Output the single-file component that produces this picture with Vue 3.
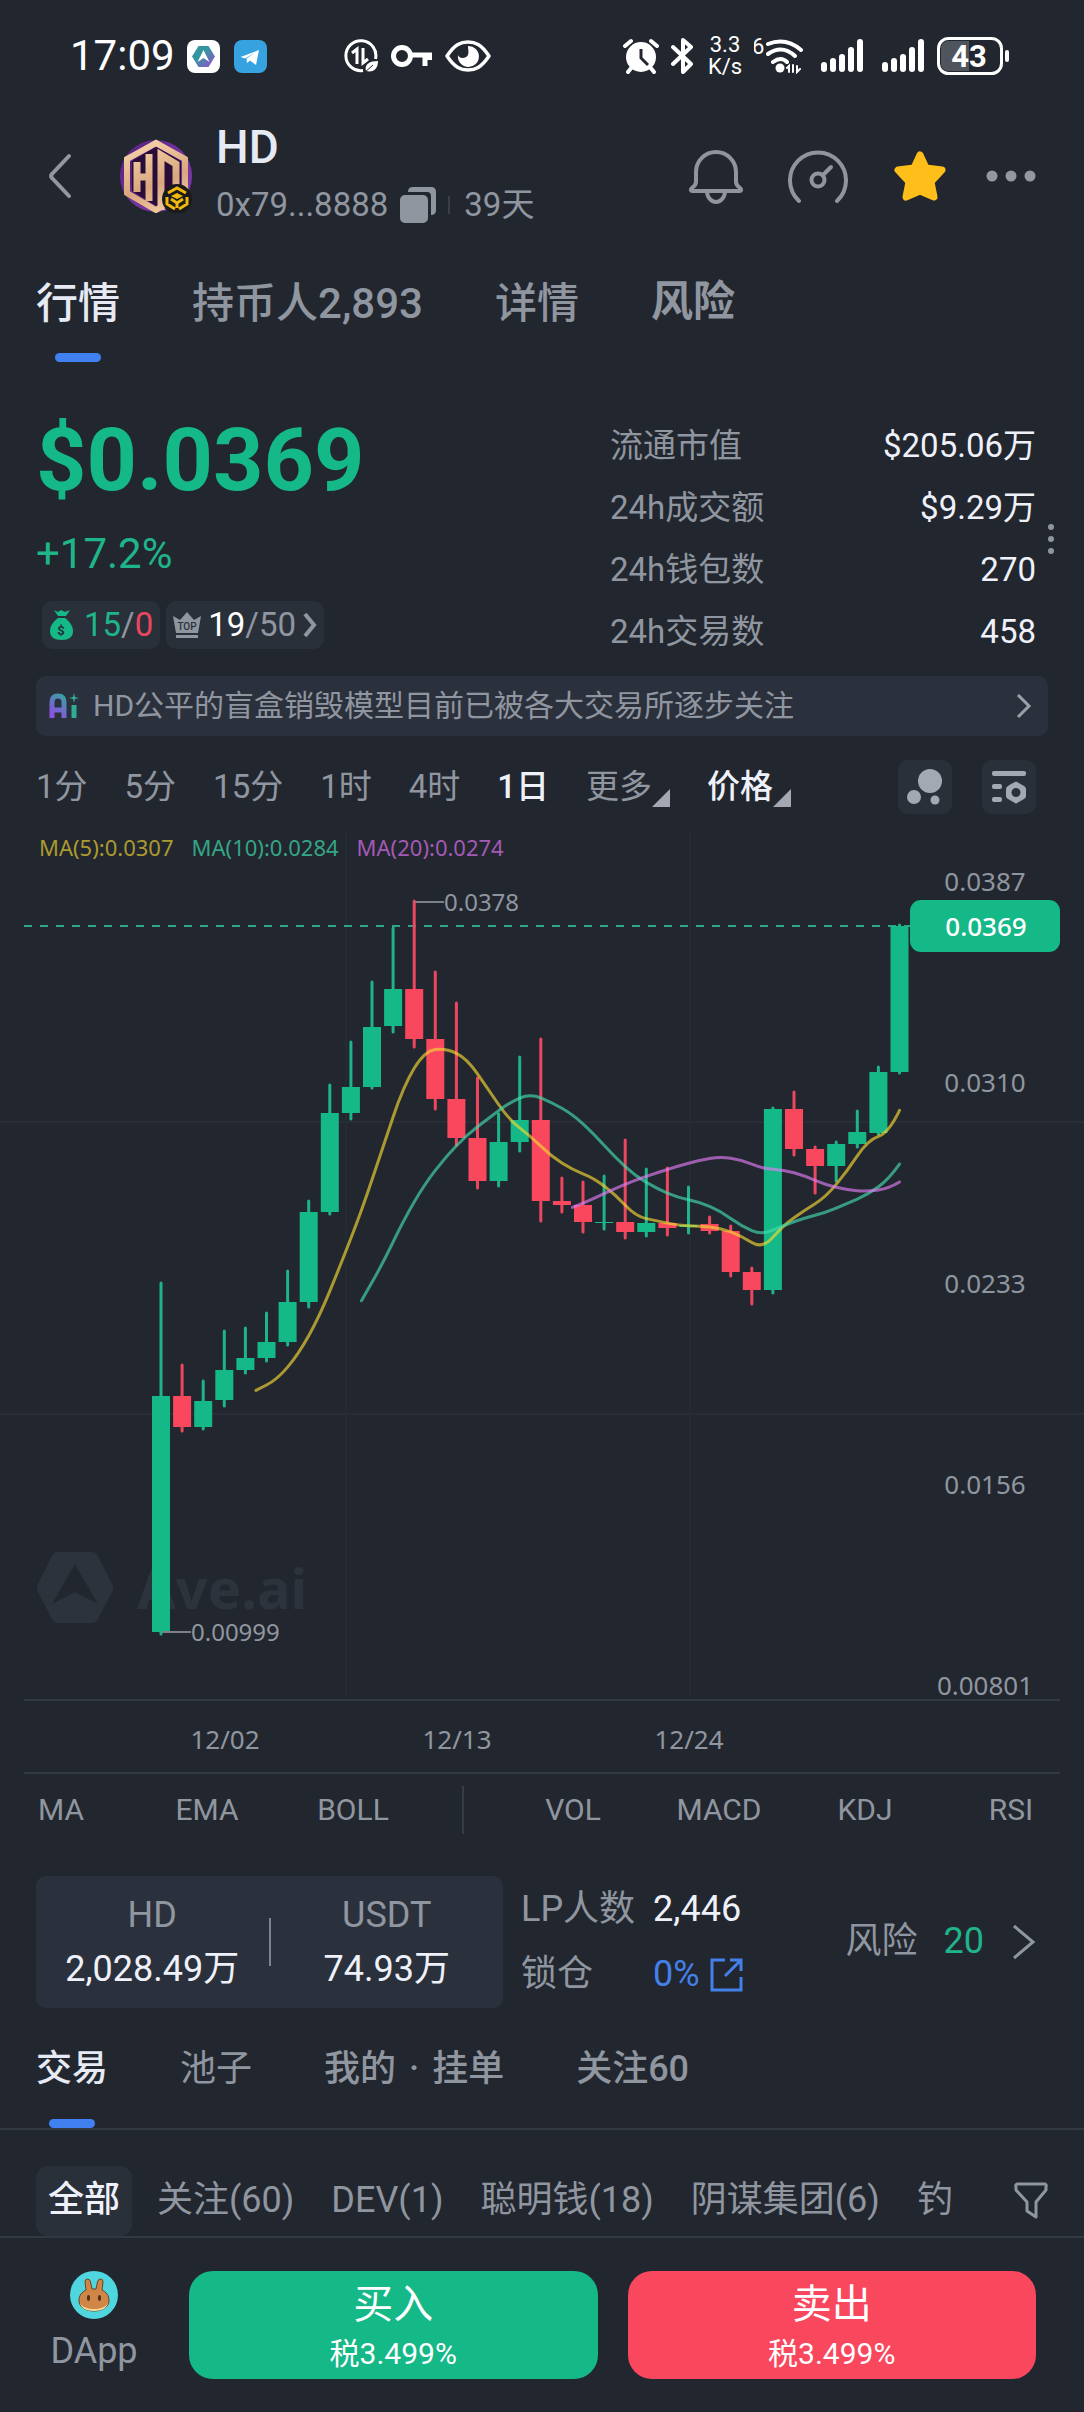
<!-- App.vue : 代币行情页 -->
<script setup>
import { ref } from "vue";

const tabs = [
  { name: "行情" },
  { name: "持币人2,893" },
  { name: "详情" },
  { name: "风险", bold: true },
];
const activeTab = ref("行情");

const stats = [
  { label: "流通市值", value: "$205.06万" },
  { label: "24h成交额", value: "$9.29万" },
  { label: "24h钱包数", value: "270" },
  { label: "24h交易数", value: "458" },
];

const periods = ["1分", "5分", "15分", "1时", "4时", "1日"];
const activePeriod = ref("1日");

const mainIndicators = ["MA", "EMA", "BOLL"];
const subIndicators = ["VOL", "MACD", "KDJ", "RSI"];

const tradeTabs = [["交易"], ["池子"], ["我的", "挂单"], ["关注60"]];
const activeTradeTab = ref("交易");

const filters = ["全部", "关注(60)", "DEV(1)", "聪明钱(18)", "阴谋集团(6)", "钓"];
const activeFilter = ref("全部");

const signalBars = [10, 14, 18, 25, 33];

// ===== K线 =====
// [涨=1/跌=0, 最高, 实体上沿, 实体下沿, 最低]
const rawCandles = [
  [1, 453, 566, 802, 804],
  [0, 535, 566, 597, 601],
  [1, 551, 571, 597, 599],
  [1, 501, 540, 570, 576],
  [1, 498, 528, 540, 543],
  [1, 483, 512, 528, 531],
  [1, 441, 472, 512, 515],
  [1, 371, 382, 472, 477],
  [1, 255, 283, 382, 384],
  [1, 212, 257, 283, 289],
  [1, 152, 197, 257, 258],
  [1, 98, 159, 196, 202],
  [0, 71, 159, 209, 217],
  [0, 142, 209, 269, 279],
  [0, 173, 269, 308, 315],
  [0, 248, 308, 351, 358],
  [1, 284, 312, 351, 356],
  [1, 227, 290, 312, 321],
  [0, 209, 290, 371, 391],
  [0, 348, 371, 375, 382],
  [0, 352, 375, 392, 402],
  [1, 346, 392, 393, 399],
  [0, 310, 392, 402, 408],
  [1, 339, 393, 402, 406],
  [0, 338, 393, 398, 405],
  [1, 357, 395, 397, 403],
  [0, 387, 394, 401, 403],
  [0, 396, 401, 442, 446],
  [0, 438, 442, 460, 474],
  [1, 278, 279, 460, 463],
  [0, 262, 279, 319, 325],
  [0, 317, 319, 336, 363],
  [1, 312, 314, 336, 351],
  [1, 281, 302, 314, 317],
  [1, 237, 242, 303, 304],
  [1, 95, 96, 242, 243],
];
const STEP = 21.1;
const FIRST_X = 161;

const candles = rawCandles.map(([up, high, top, bottom, low], i) => ({
  x: FIRST_X + i * STEP,
  up: up === 1,
  high,
  top,
  bottom,
  low,
  close: up ? top : bottom,
}));

// 均线：用中点做二次贝塞尔平滑
function maPath(n) {
  const pts = [];
  for (let i = n - 1; i < candles.length; i++) {
    const sum = candles.slice(i - n + 1, i + 1).reduce((s, c) => s + c.close, 0);
    pts.push([candles[i].x + STEP / 2, sum / n]);
  }
  let d = `M${pts[0][0]} ${pts[0][1]}`;
  for (let i = 0; i < pts.length - 1; i++) {
    const mx = (pts[i][0] + pts[i + 1][0]) / 2;
    const my = (pts[i][1] + pts[i + 1][1]) / 2;
    d += ` Q${pts[i][0]} ${pts[i][1]} ${mx} ${my}`;
  }
  return d;
}

const maLines = [
  { cls: "ma5", d: maPath(5) },
  { cls: "ma10", d: maPath(10) },
  { cls: "ma20", d: maPath(20) },
];

const priceAxis = [
  { y: 51, text: "0.0387" },
  { y: 252, text: "0.0310" },
  { y: 453, text: "0.0233" },
  { y: 654, text: "0.0156" },
  { y: 855, text: "0.00801" },
];
const dateAxis = [
  { x: 225, text: "12/02" },
  { x: 457, text: "12/13" },
  { x: 689, text: "12/24" },
];
</script>

<template>
  <div class="page">
    <!-- 系统状态栏 -->
    <div class="status-bar">
      <span class="clock">17:09</span>
      <div class="status-apps">
        <svg width="33" height="33" viewBox="0 0 33 33">
          <defs>
            <linearGradient id="aveGrad" x1="0" y1="0" x2="1" y2="1">
              <stop offset="0.4" stop-color="#3596a0" />
              <stop offset="0.8" stop-color="#7a63c4" />
            </linearGradient>
          </defs>
          <rect width="33" height="33" rx="8" fill="#fff" />
          <path d="M11.500 6h10l6.500 10.500-6.500 10.500h-10L5 16.500z" fill="url(#aveGrad)" />
          <path d="M16.500 10l6 12-6-4-6 4z" fill="#fff" />
        </svg>
        <svg width="33" height="33" viewBox="0 0 33 33">
          <rect width="33" height="33" rx="8" fill="#36a3e0" />
          <path d="M6.500 17L25 10l-3 15-6-4.500-3 2.500-.5-4.500L21 12.500l-10 6z" fill="#fff" />
        </svg>
      </div>
      <div class="status-mid">
        <svg width="35" height="34" viewBox="0 0 35 34" fill="none" stroke="#fff">
          <path d="M31.500 20A15 15 0 1 0 19 31.500" stroke-width="3" />
          <path d="M8 14l5-4V25M19 9v15l5-4" stroke-width="3" />
          <path d="M22 32c-2-7 4-10 12-10 0 7-4 12-12 10z" fill="#fff" stroke="none" />
          <path d="M20 34l9-8" stroke="#22272f" stroke-width="1" />
        </svg>
        <svg width="42" height="24" viewBox="0 0 42 24" fill="none" stroke="#fff">
          <circle cx="11" cy="12" r="8.500" stroke-width="5" />
          <path d="M20 11h21M34 12v10M38.500 12v4" stroke-width="5" />
        </svg>
        <svg width="46" height="32" viewBox="0 0 46 32" fill="none" stroke="#fff">
          <path d="M2 16C10 4 16 2 23 2s13 2 21 14C36 28 30 30 23 30S10 28 2 16z" stroke-width="3.500" stroke-linejoin="round" />
          <path d="M23 6a10.500 10.500 0 1 1-10 9c1 4 8 4 10 0 1-3 0-6 0-9z" fill="#fff" stroke="none" />
        </svg>
      </div>
      <div class="status-right">
        <svg class="alarm" width="36" height="36" viewBox="0 0 36 36" fill="none" stroke="#fff">
          <circle cx="18" cy="19" r="15" fill="#fff" stroke="none" />
          <path d="M2 8l6-5M28 3l6 5M9 29l-4 5M27 29l4 5" stroke-width="4" stroke-linecap="round" />
          <path d="M18 11v9l7 7" stroke="#22272f" stroke-width="3" />
        </svg>
        <svg class="bluetooth" width="22" height="36" viewBox="0 0 22 36" fill="none" stroke="#fff" stroke-width="4" stroke-linejoin="round" stroke-linecap="round">
          <path d="M2 9l18 17-8 8V2l8 7L2 26" />
        </svg>
        <div class="net-speed"><span>3.3</span><span>K/s</span></div>
        <svg class="wifi" width="49" height="36" viewBox="0 0 49 36" fill="none" stroke="#fff" stroke-width="4" stroke-linecap="round">
          <text x="-2" y="16" class="wifi-gen">6</text>
          <path d="M14 6q18-7 33 6M14 16q14-10 27 2M19 24q8-6 14 0" />
          <circle cx="26" cy="30" r="4.500" fill="#fff" stroke="none" />
          <path d="M35 34v-6l-2 2M39 27v7M43 28v6l3-3" stroke-width="2" />
        </svg>
        <svg v-for="n in 2" :key="n" class="signal" width="43" height="36" viewBox="0 0 43 36">
          <rect v-for="(h, i) in signalBars" :key="h" :x="i * 9" :y="34 - h" width="6" :height="h" rx="3" fill="#fff" />
        </svg>
        <svg width="73" height="38" viewBox="0 0 73 38">
          <rect x="1.500" y="1.500" width="63" height="35" rx="10" fill="none" stroke="#fff" stroke-width="3" />
          <path d="M11 4h21v30H11a7 7 0 0 1-7-7V11a7 7 0 0 1 7-7z" fill="#50545c" />
          <rect x="68" y="13" width="4" height="12" rx="2" fill="#fff" />
          <text x="32" y="30" class="battery-text" text-anchor="middle">43</text>
        </svg>
      </div>
    </div>

    <!-- 代币头部 -->
    <header class="token-header">
      <button class="icon-btn back" aria-label="返回">
        <svg width="24" height="48" viewBox="0 0 24 48" fill="none" stroke="#9297a0" stroke-width="4" stroke-linecap="round" stroke-linejoin="round">
          <path d="M21 4L4 22q-2 2 0 4l17 18" />
        </svg>
      </button>
      <svg class="avatar" width="72" height="74" viewBox="0 0 72 74">
        <defs>
          <radialGradient id="avatarBg" cx="0.4" cy="0.4" r="0.6">
            <stop offset="0" stop-color="#351052" />
            <stop offset="0.7" stop-color="#6a2a94" />
            <stop offset="1" stop-color="#7c38a6" />
          </radialGradient>
          <linearGradient id="gold" gradientUnits="userSpaceOnUse" x1="20" y1="0" x2="50" y2="74">
            <stop offset="0" stop-color="#f7d5ad" />
            <stop offset="0.6" stop-color="#d9a77d" />
            <stop offset="1" stop-color="#f2cfa4" />
          </linearGradient>
        </defs>
        <circle cx="36" cy="37" r="36" fill="url(#avatarBg)" />
        <path d="M36 4L65 20v34L36 71 7 54V20z" fill="none" stroke="url(#gold)" stroke-width="6" />
        <path d="M36 8L61 22v29L36 67 12 52V22z" fill="#2a0c38" />
        <path d="M17 23v30M29 15v47M17 38h12" stroke="url(#gold)" stroke-width="7" fill="none" />
        <path d="M41 71V16l15 9v29" stroke="url(#gold)" stroke-width="7" fill="none" />
        <circle cx="57" cy="60" r="15" fill="#1c1a1c" />
        <g fill="none" stroke="#f0b90b" stroke-width="3">
          <path d="M48 54l9-5 9 5" />
          <path d="M51 57l6-3 6 3-6 3z" fill="#f0b90b" stroke="none" />
          <path d="M47 58v7l8 5M67 58v7l-8 5M51 60l6 4 6-4M57 63v6" />
        </g>
      </svg>
      <div class="token-id">
        <h1>HD</h1>
        <div class="token-meta">
          <span>0x79...8888</span>
          <button class="icon-btn copy" aria-label="复制合约地址">
            <svg width="36" height="36" viewBox="0 0 36 36" fill="#9096a0">
              <rect x="0" y="8" width="28" height="28" rx="5" />
              <path d="M8 5q0-5 5-5h18q5 0 5 5v18q0 5-5 5V9q0-4-4-4z" />
            </svg>
          </button>
          <i class="meta-divider"></i>
          <span>39天</span>
        </div>
      </div>
      <div class="header-actions">
        <button class="icon-btn" aria-label="提醒">
          <svg width="54" height="56" viewBox="0 0 54 56" fill="none" stroke="#8f949e" stroke-width="4" stroke-linejoin="round">
            <path d="M7 24a20 20 0 0 1 40 0v10q0 3 4 6c2 2 1 3-1 3H4c-2 0-3-1-1-3q4-3 4-6z" />
            <path d="M18 43a9 11 0 0 0 18 0" />
          </svg>
        </button>
        <button class="icon-btn" aria-label="检测">
          <svg width="60" height="56" viewBox="0 0 60 56" fill="none" stroke="#8f949e" stroke-width="4" stroke-linecap="round">
            <path d="M11 53A28 28 0 1 1 49 53" />
            <circle cx="30" cy="32" r="6.500" />
            <path d="M35 27l8-8" />
          </svg>
        </button>
        <button class="icon-btn" aria-label="收藏">
          <svg width="54" height="54" viewBox="0 0 54 54">
            <path d="M27 6l6 13 16 2-11 12 3 15-14-6-14 6 3-15L5 21l16-2z" fill="#ffbe1a" stroke="#ffbe1a" stroke-width="7" stroke-linejoin="round" />
          </svg>
        </button>
        <button class="icon-btn more" aria-label="更多操作">
          <svg width="50" height="12" viewBox="0 0 50 12" fill="#9297a0">
            <circle cx="6" cy="6" r="5.500" />
            <circle cx="25" cy="6" r="5.500" />
            <circle cx="44" cy="6" r="5.500" />
          </svg>
        </button>
      </div>
    </header>

    <nav class="tabs">
      <button
        v-for="tab in tabs"
        :key="tab.name"
        class="tab"
        :class="{ active: activeTab === tab.name, bold: tab.bold }"
        @click="activeTab = tab.name"
      >
        {{ tab.name }}
      </button>
    </nav>

    <!-- 价格与统计 -->
    <section class="overview">
      <div class="price-block">
        <div class="price">$0.0369</div>
        <div class="change">+17.2%</div>
        <div class="chips">
          <button class="chip">
            <svg width="25" height="32" viewBox="0 0 25 32">
              <path d="M5 1l4 2 3-2 4 2 5-2-4 6H9z" fill="#15b887" />
              <path d="M9 9h7c5 4 8 8 8 13 0 6-4 9-11.500 9S1 28 1 22C1 17 4 13 9 9z" fill="#15b887" />
              <text x="12" y="26" class="bag-text" text-anchor="middle">$</text>
            </svg>
            <span><b class="up">15</b>/<b class="down">0</b></span>
          </button>
          <button class="chip top-chip">
            <svg width="28" height="28" viewBox="0 0 28 28">
              <path d="M0 5l7 4 7-8 7 8 7-4-3 17H3z" fill="#9096a0" />
              <rect x="3" y="24" width="22" height="3" fill="#9096a0" />
              <text x="14" y="19" class="crown-text" text-anchor="middle">TOP</text>
            </svg>
            <span><b class="white">19</b>/50</span>
            <svg width="14" height="26" viewBox="0 0 14 26" fill="none" stroke="#9096a0" stroke-width="4">
              <path d="M2 2l9 11-9 11" />
            </svg>
          </button>
        </div>
      </div>
      <dl class="stats">
        <div v-for="item in stats" :key="item.label" class="stat-row">
          <dt>{{ item.label }}</dt>
          <dd>{{ item.value }}</dd>
        </div>
      </dl>
      <button class="icon-btn stats-more" aria-label="展开统计">
        <svg width="6" height="30" viewBox="0 0 6 30" fill="#9096a0">
          <circle cx="3" cy="3" r="3" />
          <circle cx="3" cy="15" r="3" />
          <circle cx="3" cy="27" r="3" />
        </svg>
      </button>
    </section>

    <a href="#" class="ai-bar">
      <svg width="30" height="26" viewBox="0 0 30 26" fill="none">
        <defs>
          <linearGradient id="aiGrad" gradientUnits="userSpaceOnUse" x1="0" y1="25" x2="16" y2="2">
            <stop offset="0.2" stop-color="#8a52e0" />
            <stop offset="1" stop-color="#35a3a0" />
          </linearGradient>
        </defs>
        <path d="M3 25V9q0-6 6-6t6 6v16M3 17h12" stroke="url(#aiGrad)" stroke-width="5" />
        <path d="M25 12v13" stroke="#2fae95" stroke-width="5" />
        <path d="M25 0l1 4 4 1-4 1-1 4-1-4-4-1 4-1z" fill="#2fae95" />
      </svg>
      <span>HD公平的盲盒销毁模型目前已被各大交易所逐步关注</span>
      <svg class="ai-arrow" width="16" height="24" viewBox="0 0 16 24" fill="none" stroke="#9aa0aa" stroke-width="3">
        <path d="M2 1l11 11L2 23" />
      </svg>
    </a>

    <!-- 周期 -->
    <div class="periods">
      <button
        v-for="p in periods"
        :key="p"
        class="period"
        :class="{ active: activePeriod === p }"
        @click="activePeriod = p"
      >
        {{ p }}
      </button>
      <button class="period dropdown">更多</button>
      <button class="period dropdown active">价格</button>
      <div class="chart-tools">
        <button class="tool" aria-label="气泡图">
          <svg width="36" height="38" viewBox="0 0 36 38" fill="#a3a8b2">
            <circle cx="23" cy="13" r="12" />
            <circle cx="7" cy="29" r="7" />
            <circle cx="28" cy="32" r="4.500" />
          </svg>
        </button>
        <button class="tool" aria-label="图表设置">
          <svg width="36" height="34" viewBox="0 0 36 34" fill="#a3a8b2">
            <rect x="1" y="1" width="34" height="5" rx="2" />
            <rect x="1" y="14" width="10" height="5" rx="2" />
            <rect x="1" y="27" width="10" height="5" rx="2" />
            <path d="M20 14l4-2q1-1 2 0l7 4q2 1 2 3v7q0 2-2 3l-7 4q-1 1-2 0l-7-4q-2-1-2-3v-7q0-2 2-3zM25 18a4.500 4.500 0 1 0 0 9 4.500 4.500 0 1 0 0-9z" fill-rule="evenodd" />
          </svg>
        </button>
      </div>
    </div>

    <!-- K线图 -->
    <svg class="chart" viewBox="0 0 1084 944" role="img" aria-label="HD 日K线">
      <path class="grid-x" d="M0 292H1084M0 584H1084" />
      <path class="grid-y" d="M346 0V866M690 0V866" />
      <path class="axis-line" d="M24 870H1060M24 943H1060" />

      <!-- 水印 -->
      <g class="watermark">
        <path d="M58 722h34q4 0 6 4l14 28q2 4 0 8l-14 27q-2 4-6 4H58q-4 0-6-4L38 762q-2-4 0-8l14-28q2-4 6-4zM75 734L52 774l23-12 23 12z" fill-rule="evenodd" />
        <text x="137" y="779">Ave.ai</text>
      </g>

      <text class="legend" x="39" y="26"><tspan class="t-ma5">MA(5):0.0307</tspan><tspan class="t-ma10" dx="18">MA(10):0.0284</tspan><tspan class="t-ma20" dx="18">MA(20):0.0274</tspan></text>

      <path class="last-line" d="M24 96H910" />

      <g v-for="c in candles" :key="c.x" :class="c.up ? 'candle-up' : 'candle-down'">
        <line :x1="c.x" :x2="c.x" :y1="c.high" :y2="c.low" />
        <rect :x="c.x - 9" :y="c.top" width="18" :height="c.bottom - c.top" />
      </g>

      <path v-for="l in maLines" :key="l.cls" class="ma-line" :class="l.cls" :d="l.d" />

      <path class="marker" d="M415 72H444M162 802H191" />
      <text class="marker-text" x="444" y="81">0.0378</text>
      <text class="marker-text" x="191" y="811">0.00999</text>

      <text v-for="a in priceAxis" :key="a.text" class="axis-text" x="985" :y="a.y + 10" text-anchor="middle">{{ a.text }}</text>
      <rect class="last-tag" x="910" y="70" width="150" height="52" rx="11" />
      <text class="axis-text last-text" x="986" y="106" text-anchor="middle">0.0369</text>

      <text v-for="a in dateAxis" :key="a.text" class="axis-text" :x="a.x" y="919" text-anchor="middle">{{ a.text }}</text>
    </svg>

    <div class="indicators">
      <button v-for="n in mainIndicators" :key="n">{{ n }}</button>
      <i></i>
      <button v-for="n in subIndicators" :key="n">{{ n }}</button>
    </div>

    <!-- 池子信息 -->
    <section class="pool">
      <div class="pool-box">
        <div class="pool-side"><span>HD</span><strong>2,028.49万</strong></div>
        <i></i>
        <div class="pool-side"><span>USDT</span><strong>74.93万</strong></div>
      </div>
      <div class="lp">
        <span>LP人数</span>
        <strong>2,446</strong>
        <span>锁仓</span>
        <a href="#">
          0%
          <svg width="33" height="34" viewBox="0 0 33 34" fill="none" stroke="#4580ea" stroke-width="3">
            <path d="M15 2H2v30h29V19M20 2h11v11M31 2L15 18" />
          </svg>
        </a>
      </div>
      <a href="#" class="risk">
        <span>风险</span>
        <b>20</b>
        <svg width="24" height="36" viewBox="0 0 24 36" fill="none" stroke="#9096a0" stroke-width="3">
          <path d="M2 2l19 16L2 34" />
        </svg>
      </a>
    </section>

    <nav class="trade-tabs">
      <button
        v-for="t in tradeTabs"
        :key="t[0]"
        :class="{ active: activeTradeTab === t[0], light: t[0] === '池子' }"
        @click="activeTradeTab = t[0]"
      >{{ t[0] }}<template v-if="t[1]"><span class="dot"> · </span>{{ t[1] }}</template></button>
    </nav>

    <div class="filters">
      <button
        v-for="f in filters"
        :key="f"
        class="filter"
        :class="{ active: activeFilter === f }"
        @click="activeFilter = f"
      >
        {{ f }}
      </button>
      <button class="icon-btn funnel" aria-label="筛选">
        <svg width="34" height="38" viewBox="0 0 34 38" fill="none" stroke="#9096a0" stroke-width="3" stroke-linejoin="round">
          <path d="M4 2h26q3 0 2 3v3L22 20v15l-9-6v-9L2 8V5q-1-3 2-3z" />
        </svg>
      </button>
    </div>

    <!-- 底部操作 -->
    <footer class="trade-bar">
      <a href="#" class="dapp">
        <svg width="48" height="48" viewBox="0 0 48 48">
          <circle cx="24" cy="24" r="24" fill="#4fd6de" />
          <path d="M9 30c0-6 3-9 7-11l-1-8q0-3 2.500-3t3 3l1.500 7h4l1.500-7q.5-3 3-3t2.500 3l-1 8c4 2 7 5 7 11 0 6-7 10-15 10S9 36 9 30z" fill="#d08646" stroke="#6b4225" stroke-width="1" />
          <path d="M10 32c4 8 24 8 28 0-1 5-6 8-14 8s-13-3-14-8z" fill="#f5dc9d" />
          <ellipse cx="18.500" cy="27" rx="1.500" ry="3" fill="#4e2f1b" />
          <ellipse cx="29.500" cy="27" rx="1.500" ry="3" fill="#4e2f1b" />
        </svg>
        <span>DApp</span>
      </a>
      <button class="trade buy"><span>买入</span><small>税3.499%</small></button>
      <button class="trade sell"><span>卖出</span><small>税3.499%</small></button>
    </footer>
  </div>
</template>

<style>
body {
  background: #22272f;
}
</style>

<style scoped>
/* ===== 基础 ===== */
.page {
  background: #22272f;
  color: #9096a0;
  font-family: Roboto, "Noto Sans CJK SC", sans-serif;
  font-size: 36px;
  line-height: 1.2;
  overflow: hidden;
}

.page *,
.page {
  box-sizing: border-box;
}

button {
  margin: 0;
  padding: 0;
  border: none;
  background: none;
  color: inherit;
  font: inherit;
  white-space: nowrap;
  cursor: pointer;
}

a {
  color: inherit;
  text-decoration: none;
}

svg {
  display: block;
  flex-shrink: 0;
}

.icon-btn {
  display: flex;
  align-items: center;
}

/* ===== 状态栏 ===== */
.status-bar {
  display: flex;
  align-items: center;
  height: 112px;
  padding: 0 74px 0 70px;
  color: #fff;
}

.clock {
  width: 117px;
  font-size: 42px;
}

.status-apps {
  display: flex;
  gap: 14px;
}

.status-mid {
  display: flex;
  align-items: center;
  gap: 12px;
  margin-left: 77px;
}

.status-right {
  display: flex;
  align-items: center;
  margin-left: auto;
}

.bluetooth {
  margin-left: 12px;
}

.net-speed {
  display: flex;
  flex-direction: column;
  width: 36px;
  margin: 0 11px 0 14px;
  font-size: 22px;
  line-height: 22px;
  text-align: center;
}

.wifi-gen {
  fill: #fff;
  stroke: none;
  font-size: 22px;
}

.signal {
  margin-left: 18px;
}

.signal + .signal {
  margin-right: 12px;
}

.battery-text {
  fill: #fff;
  font-size: 31px;
  font-weight: 700;
}

/* ===== 代币头部 ===== */
.token-header {
  display: flex;
  align-items: center;
  height: 128px;
  padding: 0 48px;
}

.back {
  width: 72px;
}

.token-id {
  margin-left: 24px;
}

h1 {
  margin: 0;
  color: #e6eaf4;
  font-size: 46px;
  font-weight: 500;
  line-height: 58px;
}

.token-meta {
  display: flex;
  align-items: center;
  font-size: 33px;
  line-height: 58px;
}

.copy {
  margin: 0 12px;
}

.meta-divider {
  width: 2px;
  height: 18px;
  margin-right: 14px;
  background: #393e47;
}

.header-actions {
  display: flex;
  margin-left: auto;
}

.header-actions .icon-btn {
  justify-content: center;
  width: 102px;
}

.header-actions .more {
  justify-content: flex-end;
  width: 65px;
}

/* ===== 主标签 ===== */
.tabs {
  display: flex;
  gap: 72px;
  height: 122px;
  padding: 20px 36px 0;
}

.tab {
  position: relative;
  display: flex;
  height: 102px;
  font-size: 42px;
  font-weight: 500;
  line-height: 87px;
}

.tab.bold {
  font-weight: 700;
  line-height: 84px;
}

.tab.active,
.trade-tabs .active {
  color: #e6eaf4;
}

.tab.active::after,
.trade-tabs .active::after {
  content: "";
  position: absolute;
  bottom: 0;
  left: 50%;
  width: 46px;
  height: 9px;
  margin-left: -23px;
  border-radius: 5px;
  background: #4080f0;
}

/* ===== 价格 ===== */
.overview {
  display: flex;
  padding: 53px 30px 0 36px;
}

.price-block {
  flex: 1;
}

.price {
  color: #15b887;
  font-size: 88px;
  font-weight: 700;
  line-height: 90px;
}

.change {
  margin-top: 18px;
  color: #1fb48a;
  font-size: 42px;
  line-height: 62px;
}

.chips {
  display: flex;
  gap: 6px;
  margin: 16px 0 0 6px;
}

.chip {
  display: flex;
  align-items: center;
  gap: 10px;
  height: 48px;
  padding: 0 7px;
  border-radius: 10px;
  background: #2a303a;
  font-size: 33px;
}

.top-chip {
  gap: 7px;
}

.chip b {
  font-weight: 400;
}

.up {
  color: #1fb48a;
}

.down {
  color: #e8475f;
}

.white {
  color: #fff;
}

.bag-text {
  fill: #22313a;
  font-size: 13px;
  font-weight: 700;
}

.crown-text {
  fill: #2a303a;
  font-size: 10px;
  font-weight: 500;
}

.stats {
  width: 426px;
  margin: 0;
  font-size: 33px;
  line-height: 62px;
}

.stat-row {
  display: flex;
  justify-content: space-between;
}

.stats dd {
  margin: 0;
  color: #eff1fa;
}

.stats-more {
  margin-left: 12px;
}

/* ===== AI 摘要 ===== */
.ai-bar {
  display: flex;
  align-items: center;
  height: 60px;
  margin: 13px 36px 0;
  padding: 0 16px 0 13px;
  border-radius: 10px;
  background: #2b313c;
  font-size: 30px;
}

.ai-bar span {
  margin-left: 14px;
}

.ai-arrow {
  margin-left: auto;
}

/* ===== 周期 ===== */
.periods {
  display: flex;
  align-items: center;
  gap: 37px;
  height: 54px;
  margin: 24px 48px 16px 36px;
  font-size: 33px;
}

.period.active {
  color: #eff1fa;
  font-weight: 500;
}

.dropdown {
  display: flex;
  align-items: flex-end;
}

.dropdown::after {
  content: "";
  border-left: 18px solid transparent;
  border-bottom: 18px solid #a3a8b2;
}

.chart-tools {
  display: flex;
  gap: 30px;
  margin-left: auto;
}

.tool {
  display: flex;
  align-items: center;
  justify-content: center;
  width: 54px;
  height: 54px;
  border-radius: 10px;
  background: #2a303a;
}

/* ===== K线图 ===== */
.chart {
  width: 100%;
  font-family: "Noto Sans", sans-serif;
}

.grid-x,
.grid-y,
.axis-line {
  fill: none;
  stroke-width: 2;
}

.grid-x {
  stroke: #292e36;
}

.grid-y {
  stroke: #262b33;
}

.axis-line {
  stroke: #333942;
}

.watermark {
  fill: #2c333c;
  font-size: 56px;
  font-weight: 700;
}

.legend {
  font-size: 22px;
}

.t-ma5 {
  fill: #ab9a2f;
}

.t-ma10 {
  fill: #35a586;
}

.t-ma20 {
  fill: #a45ab5;
}

.last-line {
  stroke: #2fa585;
  stroke-width: 2;
  stroke-dasharray: 8 8;
}

.candle-up line {
  stroke: #1fb389;
  stroke-width: 3;
  stroke-linecap: round;
}

.candle-up rect,
.last-tag {
  fill: #15b887;
}

.candle-down line {
  stroke: #ec475e;
  stroke-width: 3;
  stroke-linecap: round;
}

.candle-down rect {
  fill: #f9475e;
}

.ma-line {
  fill: none;
  stroke-width: 3;
  stroke-linecap: round;
  opacity: 0.65;
}

.ma5 {
  stroke: #f4d832;
}

.ma10 {
  stroke: #44dcae;
}

.ma20 {
  stroke: #e27cf4;
}

.marker {
  stroke: #7b8088;
  stroke-width: 2;
}

.marker-text {
  fill: #9096a0;
  font-size: 24px;
}

.axis-text {
  fill: #9096a0;
  font-size: 26px;
}

.last-text {
  fill: #fff;
  font-weight: 500;
}

/* ===== 指标 ===== */
.indicators {
  display: flex;
  align-items: center;
  height: 72px;
  margin-left: -12px;
  font-size: 30px;
}

.indicators button {
  flex: 1;
}

.indicators i {
  width: 2px;
  height: 48px;
  margin: 0 36px;
  background: #363c46;
}

/* ===== 池子 ===== */
.pool {
  display: flex;
  align-items: center;
  margin: 30px 48px 0 36px;
}

.pool-box {
  display: flex;
  align-items: center;
  width: 467px;
  height: 132px;
  border-radius: 10px;
  background: #2b313c;
}

.pool-box i {
  width: 2px;
  height: 48px;
  background: #7d838d;
}

.pool-side {
  display: flex;
  flex: 1;
  flex-direction: column;
  align-items: center;
  line-height: 54px;
}

.pool strong {
  color: #eff1fa;
  font-weight: 400;
}

.lp {
  display: grid;
  grid-template-columns: auto auto;
  column-gap: 18px;
  margin-left: 18px;
  line-height: 65px;
}

.lp a {
  display: flex;
  align-items: center;
  gap: 10px;
  color: #4580ea;
}

.risk {
  display: flex;
  align-items: center;
  margin-left: auto;
}

.risk b {
  margin: 0 28px 0 26px;
  color: #1fb48a;
  font-weight: 400;
}

/* ===== 交易标签 ===== */
.trade-tabs {
  display: flex;
  gap: 72px;
  height: 122px;
  padding: 30px 36px 0;
  border-bottom: 2px solid #333942;
}

.trade-tabs button {
  position: relative;
  display: flex;
  font-weight: 500;
  line-height: 62px;
  white-space: pre;
}

.trade-tabs .light {
  font-weight: 400;
}

.dot {
  margin: 0 4px;
}

/* ===== 筛选 ===== */
.filters {
  display: flex;
  align-items: center;
  gap: 13px;
  padding: 36px 36px 0 36px;
}

.filter {
  height: 70px;
  padding: 0 12px;
  border-radius: 12px;
}

.filter.active {
  background: #2a303a;
  color: #eff1fa;
  font-weight: 500;
}

.funnel {
  margin-left: auto;
}

/* ===== 底部 ===== */
.trade-bar {
  display: flex;
  padding: 33px 48px 33px 36px;
  border-top: 2px solid #333942;
}

.dapp {
  display: flex;
  flex-direction: column;
  align-items: center;
  width: 116px;
  margin-right: 37px;
  line-height: 64px;
}

.trade {
  display: flex;
  flex: 1;
  flex-direction: column;
  align-items: center;
  justify-content: center;
  height: 108px;
  border-radius: 24px;
  color: #fff;
}

.trade span {
  font-size: 40px;
  line-height: 58px;
}

.trade small {
  font-size: 30px;
  line-height: 40px;
}

.buy {
  background: #15b887;
}

.sell {
  margin-left: 30px;
  background: #f9475e;
}
</style>
